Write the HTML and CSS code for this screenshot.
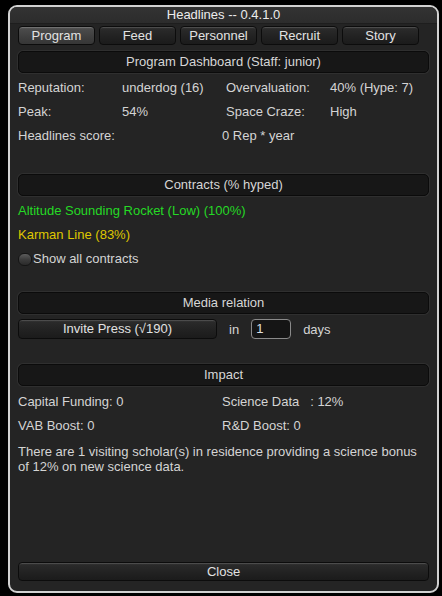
FILE: index.html
```html
<!DOCTYPE html>
<html>
<head>
<meta charset="utf-8">
<link rel="stylesheet" href="styles.css">
</head>
<body>
<div class="window">
  <div class="titlebar">Headlines -- 0.4.1.0</div>
  <div class="content">
    <div class="tabs">
      <div class="btn tab selected">Program</div>
      <div class="btn tab">Feed</div>
      <div class="btn tab">Personnel</div>
      <div class="btn tab">Recruit</div>
      <div class="btn tab">Story</div>
    </div>

    <div class="header h-first">Program Dashboard (Staff: junior)</div>
    <div class="grid4">
      <div class="row">Reputation:</div>
      <div class="row">underdog (16)</div>
      <div class="row">Overvaluation:</div>
      <div class="row">40% (Hype: 7)</div>
      <div class="row">Peak:</div>
      <div class="row">54%</div>
      <div class="row">Space Craze:</div>
      <div class="row">High</div>
    </div>
    <div class="grid2">
      <div class="row">Headlines score:</div>
      <div class="row">0 Rep * year</div>
    </div>

    <div class="header h-contracts">Contracts (% hyped)</div>
    <div class="list">
      <div class="row green">Altitude Sounding Rocket (Low) (100%)</div>
      <div class="row yellow">Karman Line (83%)</div>
      <div class="row toggle-row"><span class="toggle"></span>Show all contracts</div>
    </div>

    <div class="header h-media">Media relation</div>
    <div class="press">
      <div class="btn invite">Invite Press (√190)</div>
      <span class="in">in</span>
      <div class="input">1</div>
      <span class="days">days</span>
    </div>

    <div class="header h-impact">Impact</div>
    <div class="grid2 impact">
      <div class="row">Capital Funding: 0</div>
      <div class="row">Science Data&nbsp;&nbsp;&nbsp;: 12%</div>
      <div class="row">VAB Boost: 0</div>
      <div class="row">R&amp;D Boost: 0</div>
    </div>
    <p class="para">There are 1 visiting scholar(s) in residence providing a science bonus of 12% on new science data.</p>

    <div class="spacer"></div>
    <div class="btn close">Close</div>
  </div>
</div>
</body>
</html>
```

FILE: styles.css
```css
html, body {
  margin: 0;
  padding: 0;
  background: #000;
}

body {
  font-family: "Liberation Sans", Arial, sans-serif;
  font-size: 13px;
  color: #d4d4d4;
}

.window {
  margin: 5px 0 0 8px;
  width: 431px;
  height: 588px;
  box-sizing: border-box;
  border: 2px solid #d2d2d2;
  border-radius: 9px;
  background: #242424;
  display: flex;
  flex-direction: column;
  overflow: hidden;
}

.titlebar {
  height: 16px;
  line-height: 16px;
  text-align: center;
  color: #ececec;
  font-size: 13px;
  background: linear-gradient(#333333, #2c2c2c);
  border-bottom: 1px solid #1e1e1e;
  flex: none;
}

.content {
  flex: 1;
  display: flex;
  flex-direction: column;
  padding: 0 8px 10px 8px;
  min-height: 0;
}

.btn {
  box-sizing: border-box;
  border: 1px solid #0c0c0c;
  border-radius: 4px;
  background: linear-gradient(#3c3c3c 0%, #2a2a2a 12%, #222 55%, #1b1b1b 100%);
  box-shadow: inset 0 1px 0 rgba(255,255,255,0.10);
  color: #e2e2e2;
  text-align: center;
}

.tabs {
  margin-top: 2px;
  display: grid;
  grid-template-columns: repeat(5, 77px);
  column-gap: 4px;
}

.tab {
  height: 19px;
  line-height: 17px;
}

.tab.selected {
  background: linear-gradient(#5a5a5a 0%, #4a4a4a 15%, #3e3e3e 60%, #363636 100%);
  box-shadow: inset 0 1px 0 rgba(255,255,255,0.15);
}

.header {
  box-sizing: border-box;
  height: 22px;
  line-height: 20px;
  text-align: center;
  background: #171717;
  border: 1px solid #0b0b0b;
  border-radius: 5px;
  box-shadow: 0 0 0 1px rgba(70,70,70,0.35);
  color: #d6d6d6;
}

.h-first { margin-top: 6px; }
.h-contracts { margin-top: 26px; }
.h-media { margin-top: 21px; }
.h-impact { margin-top: 25px; }

.grid4 {
  margin-top: 3px;
  display: grid;
  grid-template-columns: 104px 104px 104px 1fr;
}

.grid2 {
  display: grid;
  grid-template-columns: 204px 1fr;
}

.row {
  height: 24px;
  line-height: 24px;
  white-space: nowrap;
}

.list {
  margin-top: 3px;
}

.green { color: #25d925; }
.yellow { color: #dfc700; }

.toggle-row {
  display: flex;
  align-items: center;
}

.toggle {
  width: 14px;
  height: 13px;
  box-sizing: border-box;
  border-radius: 6px;
  background: linear-gradient(#5c5c5c, #3c3c3c 50%, #2a2a2a);
  border: 1px solid #151515;
  margin: 0 1px 0 0;
}

.press {
  margin-top: 5px;
  display: flex;
  align-items: center;
  height: 20px;
}

.invite {
  width: 199px;
  height: 20px;
  line-height: 18px;
}

.in {
  margin-left: 12px;
}

.input {
  box-sizing: border-box;
  margin-left: 12px;
  width: 40px;
  height: 20px;
  line-height: 18px;
  padding-left: 4px;
  border: 1px solid #8a8a8a;
  border-radius: 4px;
  background: #151515;
  color: #e0e0e0;
}

.days {
  margin-left: 12px;
}

.impact {
  margin-top: 4px;
}

.para {
  margin: 6px 0 0 0;
  line-height: 15px;
}

.spacer {
  flex: 1;
}

.close {
  height: 19px;
  line-height: 17px;
  flex: none;
}
```
